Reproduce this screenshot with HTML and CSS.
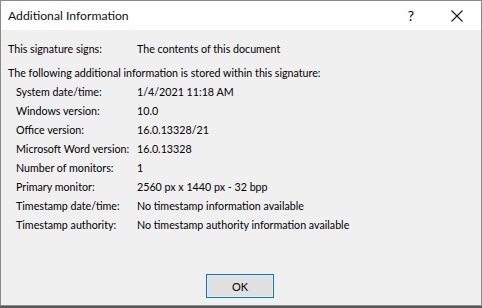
FILE: index.html
```html
<!DOCTYPE html>
<html lang="en">
	<head>
		<meta charset="UTF-8" />
		<title>Additional Information</title>
		<link rel="stylesheet" href="styles.css">
	</head>
	<body>
		<div class="dialog">
			<div class="titlebar">
				<span class="title">Additional Information</span>
				<span class="help">?</span>
				<span class="close">
					<svg width="12" height="12" viewBox="0 0 12 12"><path d="M0.5 0.5L11.5 11.5M11.5 0.5L0.5 11.5" stroke="#1a1a1a" stroke-width="1.1" fill="none"/></svg>
				</span>
			</div>
			<div class="content">
				<div class="row top">
					<span class="label">This signature signs:</span>
					<span class="value">The contents of this document</span>
				</div>
				<div class="intro">The following additional information is stored within this signature:</div>
				<div class="details">
					<div class="row"><span class="label">System date/time:</span><span class="value">1/4/2021 11:18 AM</span></div>
					<div class="row"><span class="label">Windows version:</span><span class="value">10.0</span></div>
					<div class="row"><span class="label">Office version:</span><span class="value">16.0.13328/21</span></div>
					<div class="row"><span class="label">Microsoft Word version:</span><span class="value">16.0.13328</span></div>
					<div class="row"><span class="label">Number of monitors:</span><span class="value">1</span></div>
					<div class="row"><span class="label">Primary monitor:</span><span class="value">2560 px x 1440 px - 32 bpp</span></div>
					<div class="row"><span class="label">Timestamp date/time:</span><span class="value">No timestamp information available</span></div>
					<div class="row"><span class="label">Timestamp authority:</span><span class="value">No timestamp authority information available</span></div>
				</div>
				<div class="buttons">
					<button class="ok">OK</button>
				</div>
			</div>
		</div>
	</body>
</html>
```

FILE: styles.css
```css
body {
	margin: 0;
	background: #5a5a5a;
	font-family: Lato, "Noto Sans", sans-serif;
	font-size: 10.7px;
	color: #000;
}
.dialog {
	width: 480px;
	height: 304px;
	border: 1px solid #8a8a8a;
	background: #f0f0f0;
	display: flex;
	flex-direction: column;
}
.titlebar {
	height: 29px;
	background: #fff;
	display: flex;
	align-items: center;
	padding-left: 7px;
}
.title {
	flex: 1;
	font-size: 12.2px;
	color: #111;
}
.help {
	font-size: 14px;
	width: 20px;
	margin-right: 30px;
	text-align: center;
}
.close {
	width: 12px;
	margin-right: 18px;
	display: flex;
}
.content {
	flex: 1;
	display: flex;
	flex-direction: column;
	padding: 9px 7px 0 7px;
}
.row {
	display: flex;
	height: 19px;
	align-items: center;
	white-space: nowrap;
}
.label {
	width: 121px;
	flex-shrink: 0;
}
.row.top .label {
	width: 129px;
}
.intro {
	margin-top: 5px;
	height: 19px;
	line-height: 19px;
	white-space: nowrap;
}
.details {
	padding-left: 8px;
}
.buttons {
	flex: 1;
	display: flex;
	align-items: flex-end;
	justify-content: center;
	padding-bottom: 7px;
	padding-right: 2px;
}
.ok {
	width: 68px;
	height: 24px;
	background: #e1e1e1;
	border: 1px solid #0078d7;
	box-shadow: inset 0 0 0 1px #e8f1fb;
	font-family: inherit;
	font-size: 11px;
	color: #000;
	padding: 0;
}
```
